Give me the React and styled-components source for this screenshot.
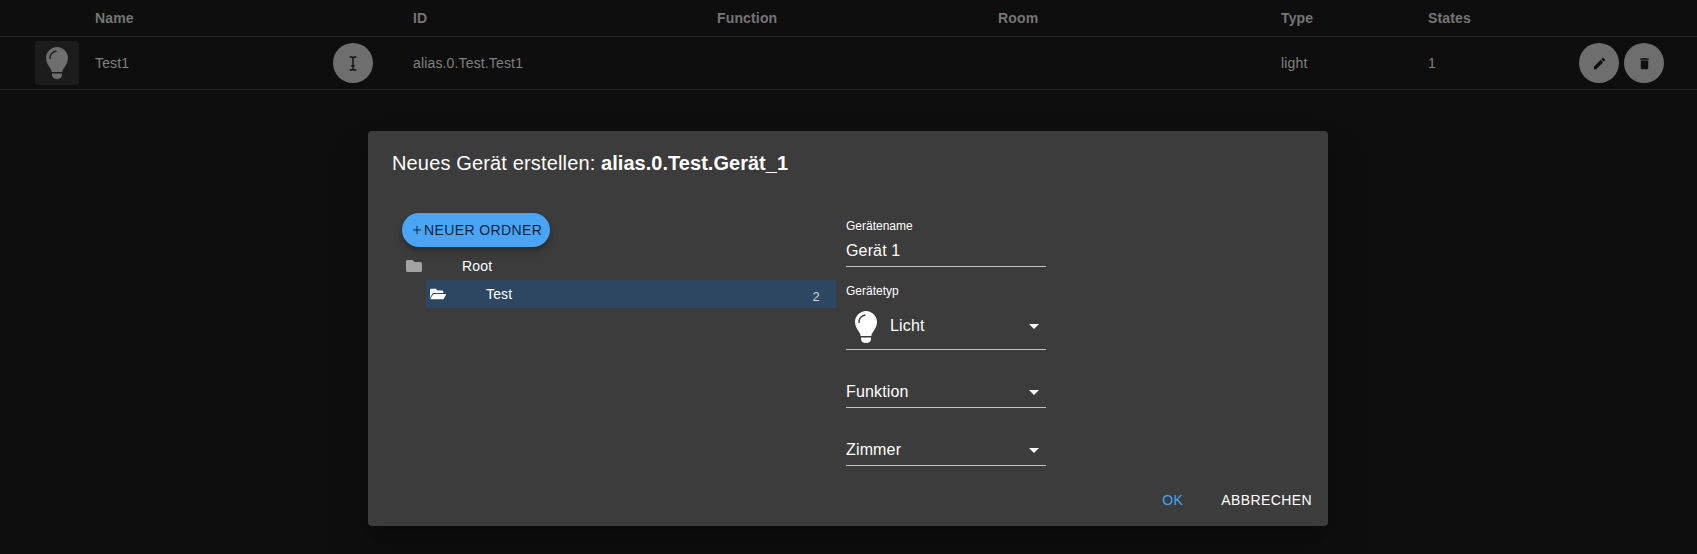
import React from 'react';
import styled, { createGlobalStyle } from 'styled-components';
import { FaFolder, FaFolderOpen } from 'react-icons/fa';
import { MdEdit, MdDelete, MdArrowDropDown } from 'react-icons/md';

const GlobalStyle = createGlobalStyle`
  html, body {
    margin: 0;
    padding: 0;
    height: 100%;
    background: #0e0e0e;
    font-family: "Liberation Sans", Arial, sans-serif;
    overflow: hidden;
  }
`;

const COLUMNS = '95px 318px 304px 281px 283px 147px 151px 1fr';

const Page = styled.div`
  position: relative;
  width: 1697px;
  height: 554px;
  background: #0e0e0e;
`;

const HeaderRow = styled.div`
  display: grid;
  grid-template-columns: ${COLUMNS};
  align-items: center;
  height: 37px;
  border-bottom: 1px solid #272727;
  box-sizing: border-box;
  font-size: 14px;
  font-weight: 700;
  letter-spacing: 0.15px;
  color: #757575;
`;

const DeviceRow = styled.div`
  display: grid;
  grid-template-columns: ${COLUMNS};
  align-items: center;
  height: 53px;
  border-bottom: 1px solid #272727;
  box-sizing: border-box;
  font-size: 14px;
  letter-spacing: 0.15px;
  color: #808080;
`;

const IconCell = styled.div`
  display: flex;
  justify-content: flex-end;
  padding-right: 16px;
`;

const IconBox = styled.div`
  display: flex;
  align-items: center;
  justify-content: center;
  width: 44px;
  height: 44px;
  border-radius: 3px;
  background: #1c1c1c;
`;

const NameCell = styled.div`
  display: flex;
  align-items: center;
  justify-content: space-between;
  padding-right: 40px;
`;

const RoundButton = styled.div`
  display: flex;
  align-items: center;
  justify-content: center;
  width: 40px;
  height: 40px;
  border-radius: 50%;
  background: #6e6e6e;
  color: #0e0e0e;
  font-size: 15px;
`;

const Actions = styled.div`
  display: flex;
  gap: 5px;
  justify-content: flex-end;
  padding-right: 33px;
`;

const Dialog = styled.div`
  position: absolute;
  left: 368px;
  top: 131px;
  display: flex;
  flex-direction: column;
  box-sizing: border-box;
  width: 960px;
  height: 395px;
  border-radius: 4px;
  background: #3c3c3c;
  color: #fff;
  box-shadow: 0 11px 15px -7px rgba(0, 0, 0, 0.2), 0 24px 38px 3px rgba(0, 0, 0, 0.14);
`;

const Title = styled.div`
  padding: 20px 24px 0;
  font-size: 20px;
  line-height: 24px;
  letter-spacing: 0.15px;
  height: 44px;
  box-sizing: border-box;
  b {
    font-weight: 700;
    letter-spacing: 0.03px;
  }
`;

const Body = styled.div`
  display: flex;
  flex: 1;
  padding: 38px 0 0 34px;
`;

const TreePane = styled.div`
  width: 434px;
  margin-right: 10px;
`;

const NewFolderButton = styled.div`
  display: inline-flex;
  align-items: center;
  gap: 3px;
  height: 34px;
  padding: 0 8px 0 11px;
  border-radius: 17px;
  background: #4aa6f5;
  color: #10233f;
  font-size: 14px;
  letter-spacing: 0.4px;
  box-shadow: 0 3px 5px -1px rgba(0, 0, 0, 0.2), 0 6px 10px 0 rgba(0, 0, 0, 0.14);
`;

const TreeList = styled.div`
  margin-top: 5px;
`;

const TreeRow = styled.div`
  display: flex;
  align-items: center;
  height: 28px;
  box-sizing: border-box;
  margin-left: ${(p) => p.$indent}px;
  padding: 0 ${(p) => (p.$selected ? 16 : 0)}px 0 4px;
  background: ${(p) => (p.$selected ? '#2d4763' : 'transparent')};
  color: ${(p) => (p.$selected ? '#fff' : '#a3a3a3')};
  font-size: 14px;
  letter-spacing: 0.15px;
`;

const TreeLabel = styled.span`
  flex: 1;
  margin: 0 0 1px 40px;
  color: #fff;
`;

const Count = styled.span`
  margin-top: 5px;
  font-size: 13px;
  color: #d5d5d5;
`;

const FormPane = styled.div`
  display: flex;
  flex-direction: column;
  width: 200px;
  padding-top: 6px;
`;

const Label = styled.div`
  font-size: 12px;
  line-height: 14px;
  color: #fff;
`;

const Field = styled.div`
  display: flex;
  align-items: center;
  height: ${(p) => p.$height}px;
  margin: ${(p) => p.$top}px 0 ${(p) => p.$bottom}px;
  padding-top: ${(p) => p.$pad || 0}px;
  box-sizing: border-box;
  border-bottom: 1px solid #c4c4c4;
  font-size: 16px;
  letter-spacing: 0.15px;
  color: #fff;
`;

const FieldText = styled.span`
  flex: 1;
`;

const TypeBulb = styled.div`
  display: flex;
  width: 22px;
  margin: 2px 13px 0 9px;
`;

const Footer = styled.div`
  display: flex;
  align-items: center;
  justify-content: flex-end;
  gap: 38px;
  height: 50px;
  padding: 0 16px 2px 0;
  box-sizing: border-box;
  font-size: 14px;
  letter-spacing: 0.4px;
`;

const FooterAction = styled.span`
  color: ${(p) => (p.$primary ? '#42a5f5' : '#fff')};
`;

const Bulb = ({ color, shine, width, height }) => (
  <svg width={width} height={height} viewBox="0 0 22 32">
    <path
      fill={color}
      d="M11 0C5 0 0 5 0 11c0 4 2 7 4 10 1 1.3 1.5 2.5 1.6 4h10.8c.1-1.5.6-2.7 1.6-4 2-3 4-6 4-10C22 5 17 0 11 0z"
    />
    <path fill={color} d="M6 26.5h10V28c0 2.4-2 4-5 4s-5-1.6-5-4z" />
    <path fill="none" stroke={shine} strokeWidth="1.3" d="M4 12c-.6-4 2-7.4 6.5-8" />
  </svg>
);

const TextCursor = () => (
  <svg width="8" height="15" viewBox="0 0 8 16" fill="none" stroke="#111" strokeWidth="1.5">
    <path d="M.5 1h2.3L4 2.2 5.2 1h2.3M4 2.2v11.6M.5 15h2.3L4 13.8 5.2 15h2.3M2 10.5h4" />
  </svg>
);

const Plus = () => (
  <svg width="8" height="8" viewBox="0 0 8 8" fill="none" stroke="#10233f" strokeWidth="1">
    <path d="M0 4h8M4 0v8" />
  </svg>
);

const Select = ({ top, bottom, height, pad, children, icon }) => (
  <Field $top={top} $bottom={bottom} $height={height} $pad={pad}>
    {icon}
    <FieldText>{children}</FieldText>
    <MdArrowDropDown size={24} />
  </Field>
);

export default function App() {
  return (
    <Page>
      <GlobalStyle />
      <HeaderRow>
        <span />
        <span>Name</span>
        <span>ID</span>
        <span>Function</span>
        <span>Room</span>
        <span>Type</span>
        <span>States</span>
        <span />
      </HeaderRow>
      <DeviceRow>
        <IconCell>
          <IconBox>
            <Bulb color="#6e6e6e" shine="#1c1c1c" width={22} height={32} />
          </IconBox>
        </IconCell>
        <NameCell>
          Test1
          <RoundButton>
            <TextCursor />
          </RoundButton>
        </NameCell>
        <span>alias.0.Test.Test1</span>
        <span />
        <span />
        <span>light</span>
        <span>1</span>
        <Actions>
          <RoundButton>
            <MdEdit />
          </RoundButton>
          <RoundButton>
            <MdDelete />
          </RoundButton>
        </Actions>
      </DeviceRow>

      <Dialog>
        <Title>
          Neues Gerät erstellen: <b>alias.0.Test.Gerät_1</b>
        </Title>
        <Body>
          <TreePane>
            <NewFolderButton>
              <Plus />
              NEUER ORDNER
            </NewFolderButton>
            <TreeList>
              <TreeRow $indent={0}>
                <FaFolder size={16} />
                <TreeLabel>Root</TreeLabel>
              </TreeRow>
              <TreeRow $indent={24} $selected>
                <FaFolderOpen size={16} color="#fff" />
                <TreeLabel>Test</TreeLabel>
                <Count>2</Count>
              </TreeRow>
            </TreeList>
          </TreePane>
          <FormPane>
            <Label>Gerätename</Label>
            <Field $top={0} $bottom={17} $height={34} $pad={3}>
              <FieldText>Gerät 1</FieldText>
            </Field>
            <Label>Gerätetyp</Label>
            <Select
              top={1}
              bottom={0}
              height={51}
              pad={3}
              icon={
                <TypeBulb>
                  <Bulb color="#fff" shine="#3c3c3c" width={22} height={32} />
                </TypeBulb>
              }
            >
              Licht
            </Select>
            <Select top={26} bottom={0} height={32}>
              Funktion
            </Select>
            <Select top={26} bottom={0} height={32}>
              Zimmer
            </Select>
          </FormPane>
        </Body>
        <Footer>
          <FooterAction $primary>OK</FooterAction>
          <FooterAction>ABBRECHEN</FooterAction>
        </Footer>
      </Dialog>
    </Page>
  );
}
